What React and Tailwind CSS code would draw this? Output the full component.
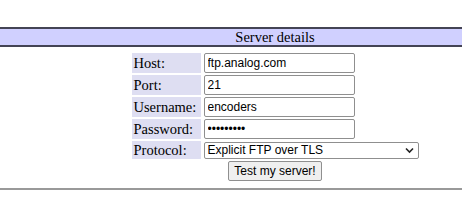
export default function App() {
  const rows = [
    { label: 'Host:', value: 'ftp.analog.com', type: 'text' },
    { label: 'Port:', value: '21', type: 'text' },
    { label: 'Username:', value: 'encoders', type: 'text' },
    { label: 'Password:', value: 'encoders1', type: 'password' },
  ];

  return (
    <div className="w-[474px] h-[222px] bg-white overflow-hidden font-['Liberation_Serif',serif] text-black">
      <div className="h-[27px]" />
      <div className="w-[462px] h-[20px] bg-[#d0d0ff] border-t-2 border-b-2 border-[#444455] flex items-center justify-center pl-[88px] text-[14.5px] leading-none">
        Server details
      </div>
      <div className="w-[462px] flex justify-center pl-[88px] pt-[6px]">
        <div className="grid grid-cols-[69px_auto] gap-x-[3px] gap-y-[2px] items-center">
          {rows.map((r) => (
            <div key={r.label} className="contents">
              <div className="h-[20px] bg-[#dedef2] text-[14.5px] leading-[20px] pl-[2px]">{r.label}</div>
              <input
                type={r.type}
                defaultValue={r.value}
                readOnly
                className="w-[151px] h-[20px] border border-[#8f8f8f] rounded-[2px] px-[3px] text-[12px] font-['Liberation_Sans',Arial,sans-serif] outline-none"
              />
            </div>
          ))}
          <div className="h-[18px] bg-[#dedef2] text-[14.5px] leading-[18px] pl-[2px]">Protocol:</div>
          <div className="relative w-[215px] h-[17px] border border-[#8f8f8f] rounded-[2px] flex items-center pl-[3px] text-[12px] font-['Liberation_Sans',Arial,sans-serif] leading-none">
            Explicit FTP over TLS
            <svg className="absolute right-[4px] top-[4px]" width="9" height="7" viewBox="0 0 9 7">
              <path d="M1 1.5 L4.5 5 L8 1.5" fill="none" stroke="#222" strokeWidth="1.6" />
            </svg>
          </div>
          <div className="col-span-2 flex justify-center">
            <button className="w-[94px] h-[20px] bg-[#efefef] border border-[#8f8f8f] rounded-[2px] text-[12px] font-['Liberation_Sans',Arial,sans-serif] leading-none">
              Test my server!
            </button>
          </div>
        </div>
      </div>
      <div className="w-[462px] mt-[7px] border-t-2 border-[#999999]" />
    </div>
  );
}
